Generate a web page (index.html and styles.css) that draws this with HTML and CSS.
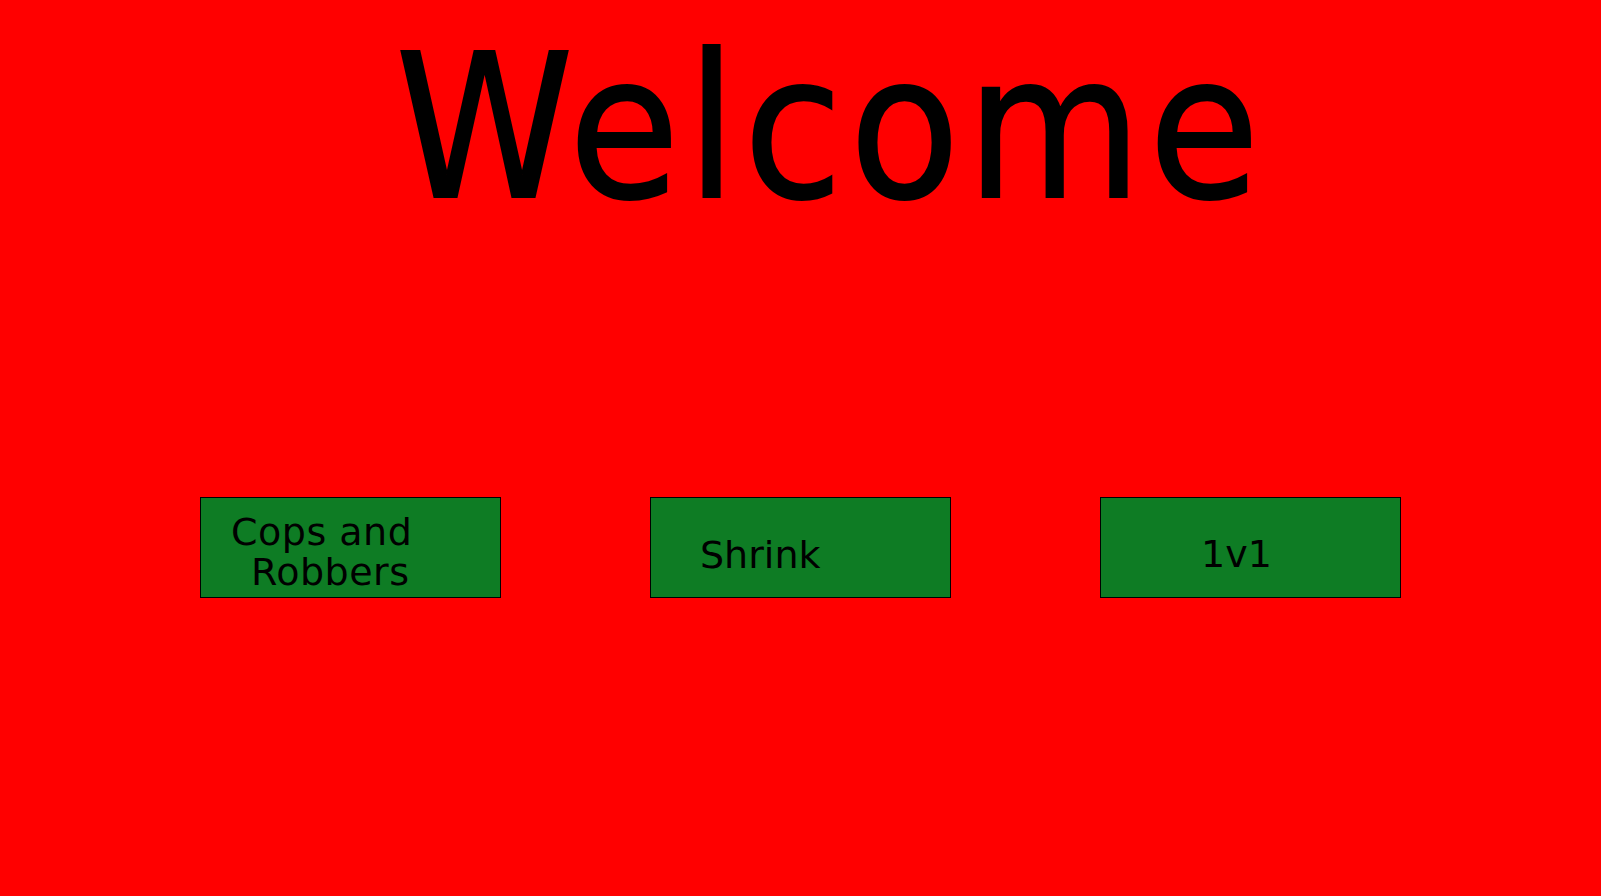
FILE: index.html
```html
<!DOCTYPE html>
<html lang="en">
<head>
<meta charset="utf-8">
<title>Welcome</title>
<link rel="stylesheet" href="styles.css">
</head>
<body>
<main class="screen">
  <h1 class="title">Welcome</h1>
  <div class="modes">
    <button class="mode mode-cops"><span class="label"><span class="line">Cops and</span><span class="line line-indent">Robbers</span></span></button>
    <button class="mode mode-shrink"><span class="label">Shrink</span></button>
    <button class="mode mode-1v1"><span class="label">1v1</span></button>
  </div>
</main>
</body>
</html>
```

FILE: styles.css
```css
html, body {
  margin: 0;
  padding: 0;
  height: 100%;
}

body {
  background: #ff0000;
  font-family: "DejaVu Sans", "Liberation Sans", sans-serif;
  color: #000;
  overflow: hidden;
}

.screen {
  display: flex;
  flex-direction: column;
  align-items: center;
}

.title {
  margin: 12px 0 0 61px;
  font-family: "DejaVu Sans Condensed", "DejaVu Sans", sans-serif;
  font-stretch: condensed;
  font-weight: normal;
  font-size: 200px;
  line-height: 232px;
  letter-spacing: 7px;
  -webkit-text-stroke: 2px #000;
}

.modes {
  margin-top: 253px;
  display: flex;
  justify-content: center;
  gap: 149px;
}

.mode {
  box-sizing: border-box;
  width: 301px;
  height: 101px;
  margin: 0;
  padding: 0;
  border: 1px solid #000;
  background: #0e7c24;
  color: #000;
  font-family: "DejaVu Sans", "Liberation Sans", sans-serif;
  font-size: 38px;
  line-height: 40px;
  text-align: left;
  display: flex;
  align-items: flex-start;
  cursor: pointer;
}

.label {
  display: inline-block;
}

.line {
  display: block;
}

.mode-cops {
  padding: 14px 0 0 30px;
  letter-spacing: 0.5px;
}

.line-indent {
  padding-left: 20px;
}

.mode-shrink {
  padding: 37px 0 0 49px;
}

.mode-1v1 {
  padding: 36px 0 0 100px;
}
```
